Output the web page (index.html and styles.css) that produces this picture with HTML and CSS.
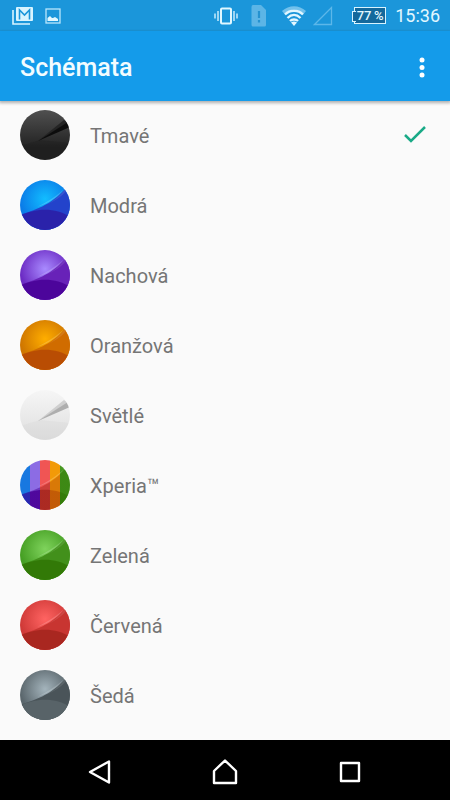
FILE: index.html
```html
<!DOCTYPE html>
<html lang="cs">
<head>
<meta charset="utf-8">
<meta name="viewport" content="width=device-width, initial-scale=1">
<title>Schémata</title>
<link rel="stylesheet" href="styles.css">
</head>
<body>
<svg class="defs" aria-hidden="true">
  <defs>
    <linearGradient id="stripes-low" gradientUnits="userSpaceOnUse" x1="0" y1="0" x2="50" y2="0">
      <stop offset=".2" stop-color="#2b22ac"/><stop offset=".2" stop-color="#4c0399"/>
      <stop offset=".4" stop-color="#4c0399"/><stop offset=".4" stop-color="#a82820"/>
      <stop offset=".6" stop-color="#a82820"/><stop offset=".6" stop-color="#c05806"/>
      <stop offset=".8" stop-color="#c05806"/><stop offset=".8" stop-color="#347b09"/>
    </linearGradient>
    <symbol id="wave" viewBox="0 0 50 50">
      <path class="wave-mid" d="M0 35C13 30 31 26 46 8L50 12V50H0Z"/>
      <path class="wave-low" d="M0 36C14 28 36 27 50 37V50H0Z"/>
      <path d="M17 27C29 23 38 17 44 9C38 15 29 21 17 27Z" fill="#fff" opacity=".18"/>
      <path d="M22 27C34 22 42 16 46 11L45 9C39 17 31 23 22 27Z" fill="#fff" opacity=".1"/>
    </symbol>
    <symbol id="shard" viewBox="0 0 50 50">
      <path class="shard-low" d="M0 36L20 30L50 33V50H0Z"/>
      <path class="shard-mid" d="M18 31L44 10L48 13Z"/>
      <path class="shard-top" d="M18 31L48 12L50 17Z"/>
    </symbol>
    <symbol id="check" viewBox="0 0 24 20">
      <path d="M2 10L8 16L22 2" fill="none" stroke="#1aaa87" stroke-width="2.5"/>
    </symbol>
  </defs>
</svg>
<div class="screen">
  <div class="status">
    <svg width="22" height="20" viewBox="0 0 22 20" role="img" aria-label="Gmail">
      <path d="M1 4V18H18" fill="none" stroke="#d8f4ff" stroke-width="1.6"/>
      <rect x="4" y="1" width="17" height="14" rx="1" fill="#d8f4ff"/>
      <path d="M7.500 13.500V4L12.500 9L17.500 4V13.500" fill="none" stroke="#1b96da" stroke-width="1.6"/>
    </svg>
    <svg class="picture" width="16" height="16" viewBox="0 0 16 16" role="img" aria-label="Snímek">
      <rect x="1" y="1" width="14" height="14" fill="none" stroke="#b9e6fc" stroke-width="1.3"/>
      <path d="M2.500 13V10L5 8L7 10L8 10L10 9L13 11V13Z" fill="#e0f7ff"/>
    </svg>
    <span class="spacer"></span>
    <svg width="24" height="18" viewBox="0 0 24 18" role="img" aria-label="Vibrace">
      <rect x="7" y="1.500" width="10" height="15" rx="1" fill="none" stroke="#e0f7ff" stroke-width="2"/>
      <path d="M4 4V14M20 4V14M1 6.500V11.500M23 6.500V11.500" stroke="#c8ecfd" stroke-width="1.500"/>
    </svg>
    <svg class="sim" width="16" height="22" viewBox="0 0 16 22" role="img" aria-label="Bez SIM karty">
      <path d="M2 0H10L15 5V20Q15 21.500 13.500 21.500H2Q.5 21.500 .5 20V2Q.5 0 2 0Z" fill="#5cb5e6"/>
      <path d="M8 6V13M8 15V17.500" stroke="#2492d0" stroke-width="2.200"/>
    </svg>
    <svg class="wifi" width="26" height="22" viewBox="0 0 26 22" role="img" aria-label="Wi-Fi">
      <path d="M1 6C8-.5 18-.5 25 6L22.500 9C16 3 10 3 3.500 9Z" fill="#72c1ec"/>
      <path d="M4 9.500C9 4.500 17 4.500 22 9.500M6.500 13C10.500 9 15.500 9 19.500 13M9 16C11 14 15 14 17 16" fill="none" stroke="#e2f7ff" stroke-width="2.300"/>
      <path d="M10 17.500C12 16 14 16 16 17.500L13 21Z" fill="#e2f7ff"/>
    </svg>
    <svg class="signal" width="20" height="20" viewBox="0 0 20 20" role="img" aria-label="Bez signálu">
      <path d="M1.500 18.500H18.500V1.500Z" fill="none" stroke="#5cb7e9" stroke-width="1.300"/>
    </svg>
    <span class="battery">77&#8201;%</span>
    <time>15:36</time>
  </div>
  <header class="bar">
    <h1>Schémata</h1>
    <button class="more" type="button" aria-label="Další možnosti">
      <svg width="6" height="22" viewBox="0 0 6 22"><g fill="#fff"><circle cx="3" cy="3" r="2.500"/><circle cx="3" cy="10.500" r="2.500"/><circle cx="3" cy="18" r="2.500"/></g></svg>
    </button>
  </header>
  <main class="themes">
    <label class="row"><input type="radio" name="theme" checked><svg class="orb dark"><use href="#shard"/></svg><span>Tmavé</span><svg class="check"><use href="#check"/></svg></label>
    <label class="row"><input type="radio" name="theme"><svg class="orb blue"><use href="#wave"/></svg><span>Modrá</span><svg class="check"><use href="#check"/></svg></label>
    <label class="row"><input type="radio" name="theme"><svg class="orb purple"><use href="#wave"/></svg><span>Nachová</span><svg class="check"><use href="#check"/></svg></label>
    <label class="row"><input type="radio" name="theme"><svg class="orb orange"><use href="#wave"/></svg><span>Oranžová</span><svg class="check"><use href="#check"/></svg></label>
    <label class="row"><input type="radio" name="theme"><svg class="orb light"><use href="#shard"/></svg><span>Světlé</span><svg class="check"><use href="#check"/></svg></label>
    <label class="row"><input type="radio" name="theme"><svg class="orb xperia" viewBox="0 0 50 50"><g fill="url(#stripes-low)"><path d="M0 35C13 30 31 26 46 8L50 12V50H0Z" opacity=".5"/><path d="M0 36C14 28 36 27 50 37V50H0Z" opacity=".9"/></g><path d="M17 27C29 23 38 17 44 9C38 15 29 21 17 27Z" fill="#fff" opacity=".2"/></svg><span>Xperia™</span><svg class="check"><use href="#check"/></svg></label>
    <label class="row"><input type="radio" name="theme"><svg class="orb green"><use href="#wave"/></svg><span>Zelená</span><svg class="check"><use href="#check"/></svg></label>
    <label class="row"><input type="radio" name="theme"><svg class="orb red"><use href="#wave"/></svg><span>Červená</span><svg class="check"><use href="#check"/></svg></label>
    <label class="row"><input type="radio" name="theme"><svg class="orb gray"><use href="#wave"/></svg><span>Šedá</span><svg class="check"><use href="#check"/></svg></label>
  </main>
  <nav class="keys">
    <button type="button" aria-label="Zpět"><svg width="26" height="26" viewBox="0 0 26 26"><path d="M3 13L22 2.500V23.500Z"/></svg></button>
    <button type="button" aria-label="Domů"><svg width="26" height="26" viewBox="0 0 26 26"><path d="M2 24V12L13 1.500L24 12V24Z"/></svg></button>
    <button type="button" aria-label="Přehled"><svg width="26" height="26" viewBox="0 0 26 26"><path d="M4 4H22V22H4Z"/></svg></button>
  </nav>
</div>
</body>
</html>
```
FILE: styles.css
```css
* {
  box-sizing: border-box;
}

body {
  margin: 0;
  background: #fafafa;
  color: #757575;
  font-family: Roboto, "Noto Sans", sans-serif;
}

.defs {
  position: absolute;
  width: 0;
  height: 0;
}

.screen {
  display: flex;
  flex-direction: column;
  min-height: 100vh;
}

svg {
  display: block;
  flex: none;
}

button {
  display: flex;
  align-items: center;
  justify-content: center;
  padding: 0;
  border: 0;
  background: none;
}

/* Status bar */
.status {
  display: flex;
  align-items: center;
  height: 31px;
  padding: 0 10px 0 12px;
  background: #1b96da;
  color: #e2f7ff;
}

.picture {
  margin-left: 11px;
}

.spacer {
  flex: 1;
}

.sim {
  margin-left: 13px;
}

.wifi {
  margin-left: 14px;
}

.signal {
  margin-left: 6px;
}

.battery {
  position: relative;
  width: 32px;
  height: 17px;
  margin-left: 21px;
  border: 1px solid #d8f4ff;
  background: #14699c;
  font-size: 13px;
  font-weight: 500;
  line-height: 15px;
  text-align: center;
  white-space: nowrap;
}

.battery::before {
  content: "";
  position: absolute;
  top: 3px;
  left: -3px;
  width: 3px;
  height: 9px;
  border: 1px solid #d8f4ff;
  border-right: 0;
  background: #14699c;
}

time {
  margin-left: 9px;
  font-size: 18px;
  font-weight: 400;
  line-height: 24px;
}

/* Title bar */
.bar {
  position: relative;
  display: flex;
  align-items: center;
  justify-content: space-between;
  height: 69px;
  padding: 4px 8px 0 20px;
  background: #149bea;
  box-shadow: 0 1px 0 #149bea, 0 2px 3px 1px rgba(0, 0, 0, 0.3);
}

h1 {
  margin: 0;
  color: #f2fcff;
  font-size: 25px;
  font-weight: 500;
  line-height: 32px;
}

.more {
  width: 40px;
  height: 40px;
}

/* Theme list */
.themes {
  flex: 1;
}

.row {
  position: relative;
  display: flex;
  align-items: center;
  height: 70px;
  padding: 0 23px 0 20px;
  font-size: 20px;
  line-height: 24px;
}

.row input {
  position: absolute;
  inset: 0;
  width: 100%;
  height: 100%;
  margin: 0;
  opacity: 0;
}

.row span {
  flex: 1;
  padding: 2px 0 0 20px;
}

.check {
  width: 24px;
  height: 20px;
  visibility: hidden;
}

input:checked ~ .check {
  visibility: visible;
}

.orb {
  width: 50px;
  height: 50px;
  border-radius: 50%;
  background: radial-gradient(circle at 50% 38%, var(--glow), var(--base) 62%);
}

.wave-mid {
  fill: var(--mid);
}

.wave-low {
  fill: var(--low);
  opacity: 0.85;
}

.shard-low {
  fill: var(--low);
}

.shard-mid {
  fill: var(--mid);
}

.shard-top {
  fill: var(--top);
}

.dark {
  background: linear-gradient(#505050, #222 75%);
  --low: rgba(20, 20, 20, 0.2);
  --mid: #242424;
  --top: #0c0c0c;
}

.light {
  background: linear-gradient(#f6f6f6, #dedede);
  --low: rgba(205, 205, 205, 0.2);
  --mid: #cfcfcf;
  --top: #aeaeae;
}

.blue {
  --glow: #12bdff;
  --base: #0a7ce8;
  --mid: #2343cb;
  --low: #2c1ca4;
}

.purple {
  --glow: #a98bff;
  --base: #6c2cc4;
  --mid: #6822b8;
  --low: #480095;
}

.orange {
  --glow: #ffae00;
  --base: #cf7600;
  --mid: #d06c00;
  --low: #b54803;
}

.green {
  --glow: #7fd35c;
  --base: #469f24;
  --mid: #42901b;
  --low: #2f7603;
}

.red {
  --glow: #ff6462;
  --base: #d03a38;
  --mid: #c83531;
  --low: #a3241d;
}

.gray {
  --glow: #a4b4bc;
  --base: #5b676d;
  --mid: #4a5459;
  --low: #5b666b;
}

.xperia {
  background: linear-gradient(90deg, #1878e0 20%, #8c6ce4 20% 40%, #f05554 40% 60%, #f29a08 60% 80%, #479720 80%);
}

/* Navigation keys */
.keys {
  display: flex;
  justify-content: center;
  height: 60px;
  padding: 3px 0 0;
  background: #000;
}

.keys button {
  width: 125px;
}

.keys path {
  fill: none;
  stroke: #fff;
  stroke-width: 2.4;
  stroke-linejoin: round;
}
```
